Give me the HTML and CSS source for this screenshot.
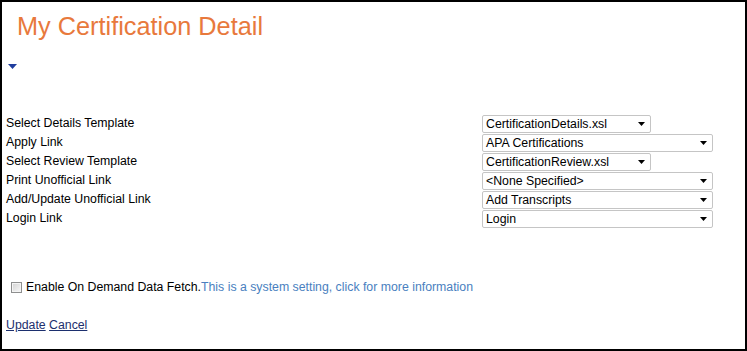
FILE: index.html
```html
<!DOCTYPE html>
<html lang="en">
<head>
    <title>My Certification Detail</title>
    <meta charset="UTF-8">
    <meta name="viewport" content="width=device-width, initial-scale=1.0">
    <link rel="stylesheet" href="styles.css">
</head>
<body>
    <div class="page">
        <h1 class="title">My Certification Detail</h1>

        <div class="toggle">
            <svg viewBox="0 0 9 5" width="9" height="5" xmlns="http://www.w3.org/2000/svg">
                <polygon points="0,0 9,0 4.5,5"></polygon>
            </svg>
        </div>

        <table class="settings">
            <tr>
                <td class="label">Select Details Template</td>
                <td>
                    <div class="dropdown narrow">
                        <span>CertificationDetails.xsl</span>
                        <svg class="arrow" viewBox="0 0 7 4" xmlns="http://www.w3.org/2000/svg"><polygon points="0,0 7,0 3.5,4"></polygon></svg>
                    </div>
                </td>
            </tr>
            <tr>
                <td class="label">Apply Link</td>
                <td>
                    <div class="dropdown wide">
                        <span>APA Certifications</span>
                        <svg class="arrow" viewBox="0 0 7 4" xmlns="http://www.w3.org/2000/svg"><polygon points="0,0 7,0 3.5,4"></polygon></svg>
                    </div>
                </td>
            </tr>
            <tr>
                <td class="label">Select Review Template</td>
                <td>
                    <div class="dropdown narrow">
                        <span>CertificationReview.xsl</span>
                        <svg class="arrow" viewBox="0 0 7 4" xmlns="http://www.w3.org/2000/svg"><polygon points="0,0 7,0 3.5,4"></polygon></svg>
                    </div>
                </td>
            </tr>
            <tr>
                <td class="label">Print Unofficial Link</td>
                <td>
                    <div class="dropdown wide">
                        <span>&lt;None Specified&gt;</span>
                        <svg class="arrow" viewBox="0 0 7 4" xmlns="http://www.w3.org/2000/svg"><polygon points="0,0 7,0 3.5,4"></polygon></svg>
                    </div>
                </td>
            </tr>
            <tr>
                <td class="label">Add/Update Unofficial Link</td>
                <td>
                    <div class="dropdown wide">
                        <span>Add Transcripts</span>
                        <svg class="arrow" viewBox="0 0 7 4" xmlns="http://www.w3.org/2000/svg"><polygon points="0,0 7,0 3.5,4"></polygon></svg>
                    </div>
                </td>
            </tr>
            <tr>
                <td class="label">Login Link</td>
                <td>
                    <div class="dropdown wide">
                        <span>Login</span>
                        <svg class="arrow" viewBox="0 0 7 4" xmlns="http://www.w3.org/2000/svg"><polygon points="0,0 7,0 3.5,4"></polygon></svg>
                    </div>
                </td>
            </tr>
        </table>

        <div class="fetch">
            <input type="checkbox" class="check" id="onDemandFetch">
            <label for="onDemandFetch">Enable On Demand Data Fetch.</label><a href="#" class="info">This is a system setting, click for more information</a>
        </div>

        <div class="actions">
            <a href="#">Update</a> <a href="#">Cancel</a>
        </div>
    </div>
</body>
</html>
```

FILE: styles.css
```css
:root {
    --title-color: #e8793c;
    --link-color: #1c2f6e;
    --info-color: #4a7fc0;
    --select-border: #c5c5c5;
}

* {
    margin: 0;
    padding: 0;
    box-sizing: border-box;
}

body {
    font-family: "Liberation Sans", Arial, sans-serif;
    font-size: 12.3px;
    color: #000;
    background-color: #fff;
}

.page {
    width: 747px;
    height: 351px;
    border: 2px solid #000;
    padding: 9px 4px 0;
}

.title {
    font-size: 25.3px;
    font-weight: normal;
    line-height: 30px;
    color: var(--title-color);
    margin-left: 11px;
}

.toggle {
    height: 6px;
    margin: 23px 0 0 2px;
    line-height: 0;
}

.toggle svg {
    fill: #1f3d9e;
}

/* Settings table */
.settings {
    border-collapse: collapse;
    margin-top: 44px;
}

.settings td {
    height: 19px;
    padding: 0;
    vertical-align: middle;
}

.settings .label {
    width: 476px;
    line-height: 14px;
    padding-bottom: 1px;
}

.dropdown {
    display: flex;
    align-items: center;
    justify-content: space-between;
    height: 18px;
    padding: 0 5px 0 3px;
    border: 1px solid var(--select-border);
    border-radius: 2px;
    background-color: #fff;
    line-height: 14px;
}

.dropdown.narrow {
    width: 169px;
}

.dropdown.wide {
    width: 231px;
}

.arrow {
    width: 7px;
    height: 4px;
    fill: #000;
}

/* Checkbox row */
.fetch {
    display: flex;
    align-items: center;
    height: 14px;
    margin-top: 52px;
    line-height: 14px;
}

.check {
    appearance: none;
    -webkit-appearance: none;
    width: 11px;
    height: 11px;
    margin: 0 4px 0 5px;
    border: 1px solid #8e8f8f;
    box-shadow: inset 0 0 0 1px #f4f4f4;
    background: linear-gradient(135deg, #d2d2d2, #f8f8f8);
}

.info {
    color: var(--info-color);
    text-decoration: none;
}

.actions {
    margin-top: 24px;
    line-height: 14px;
}

.actions a {
    color: var(--link-color);
}
```
